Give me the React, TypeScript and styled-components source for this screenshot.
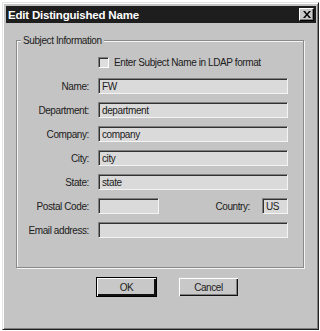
import React, { useState } from "react";
import styled, { createGlobalStyle } from "styled-components";

const GlobalStyle = createGlobalStyle`
  html, body {
    margin: 0;
    padding: 0;
    background: #ffffff;
  }
  body {
    font-family: "Liberation Sans", Arial, sans-serif;
    font-size: 10px;
    letter-spacing: -0.4px;
    color: #000;
  }
`;

const fields = [
  { label: "Name:", value: "FW" },
  { label: "Department:", value: "department" },
  { label: "Company:", value: "company" },
  { label: "City:", value: "city" },
  { label: "State:", value: "state" },
];

export default function App() {
  const [ldap, setLdap] = useState(false);

  return (
    <>
      <GlobalStyle />
      <Page>
        <Window>
          <TitleBar>
            <Title>Edit Distinguished Name</Title>
            <CloseButton aria-label="Close">
              <svg width="8" height="7" viewBox="0 0 8 7">
                <path d="M0 0h2l2 2.5L6 0h2L5 3.5 8 7H6L4 4.5 2 7H0l3-3.5z" fill="#000" />
              </svg>
            </CloseButton>
          </TitleBar>

          <Body>
            <GroupBox>
              <Legend>Subject Information</Legend>
              <Form>
                <CheckRow onClick={() => setLdap(!ldap)}>
                  <CheckBox>{ldap ? "✓" : ""}</CheckBox>
                  <span>Enter Subject Name in LDAP format</span>
                </CheckRow>

                {fields.map((f) => (
                  <React.Fragment key={f.label}>
                    <Label>{f.label}</Label>
                    <TextBox>{f.value}</TextBox>
                  </React.Fragment>
                ))}

                <Label>Postal Code:</Label>
                <SplitRow>
                  <TextBox $width={61} />
                  <CountryGroup>
                    <span>Country:</span>
                    <TextBox $width={26}>US</TextBox>
                  </CountryGroup>
                </SplitRow>

                <Label>Email address:</Label>
                <TextBox />
              </Form>
            </GroupBox>

            <ButtonRow>
              <Button $default>OK</Button>
              <Button>Cancel</Button>
            </ButtonRow>
          </Body>
        </Window>
      </Page>
    </>
  );
}

const Page = styled.div`
  padding: 2px 1px 0 2px;
`;

const Window = styled.div`
  width: 317px;
  height: 328px;
  box-sizing: border-box;
  background: #c4c4c4;
  border-top: 1px solid #e4e4e4;
  border-left: 1px solid #e4e4e4;
  border-right: 1px solid #202020;
  border-bottom: 1px solid #202020;
  box-shadow: inset 1px 1px 0 #ffffff, inset -1px -1px 0 #808080;
  padding: 3px 2px 2px 3px;
  display: flex;
  flex-direction: column;
`;

const TitleBar = styled.div`
  height: 17px;
  background: #1e1e1e;
  display: flex;
  align-items: center;
  justify-content: space-between;
  padding: 0 2px 0 2px;
`;

const Title = styled.div`
  color: #ffffff;
  font-weight: bold;
  font-size: 11.5px;
  letter-spacing: -0.2px;
`;

const CloseButton = styled.div`
  width: 15px;
  height: 13px;
  box-sizing: border-box;
  background: #c8c8c8;
  border-top: 1px solid #ffffff;
  border-left: 1px solid #ffffff;
  border-right: 1px solid #000;
  border-bottom: 1px solid #000;
  box-shadow: inset -1px -1px 0 #808080;
  display: flex;
  align-items: center;
  justify-content: center;
`;

const Body = styled.div`
  padding: 12px 12px 0 10px;
  display: flex;
  flex-direction: column;
`;

const GroupBox = styled.fieldset`
  margin: 0;
  padding: 10px 0 29px 0;
  border: 1px solid #8a8a8a;
  box-shadow: inset 1px 1px 0 #f4f4f4, 1px 1px 0 #f4f4f4;
  min-width: 0;
`;

const Legend = styled.legend`
  margin-left: 4px;
  padding: 0 2px;
  background: #c4c4c4;
  font-size: 10px;
  color: #202020;
`;

const Form = styled.div`
  display: grid;
  grid-template-columns: 72px 190px;
  column-gap: 9px;
  row-gap: 8px;
  align-items: center;
`;

const CheckRow = styled.label`
  grid-column: 2;
  display: flex;
  align-items: center;
  gap: 5px;
  height: 12px;
  margin-bottom: 2px;
  white-space: nowrap;
  cursor: default;
  color: #202020;
`;

const CheckBox = styled.span`
  width: 11px;
  height: 11px;
  box-sizing: border-box;
  background: #dedede;
  border-top: 1px solid #808080;
  border-left: 1px solid #808080;
  border-right: 1px solid #ffffff;
  border-bottom: 1px solid #ffffff;
  box-shadow: inset 1px 1px 0 #303030;
  font-size: 9px;
  line-height: 9px;
  text-align: center;
`;

const Label = styled.div`
  text-align: right;
  color: #202020;
  white-space: nowrap;
`;

const TextBox = styled.div<{ $width?: number }>`
  width: ${(p) => (p.$width ? `${p.$width}px` : "100%")};
  height: 16px;
  box-sizing: border-box;
  background: #dadada;
  border-top: 1px solid #808080;
  border-left: 1px solid #808080;
  border-right: 1px solid #f4f4f4;
  border-bottom: 1px solid #f4f4f4;
  box-shadow: inset 1px 1px 0 #303030;
  padding: 1px 0 0 3px;
  line-height: 13px;
  color: #202020;
  white-space: nowrap;
  overflow: hidden;
`;

const SplitRow = styled.div`
  display: flex;
  align-items: center;
  justify-content: space-between;
`;

const CountryGroup = styled.div`
  display: flex;
  align-items: center;
  gap: 12px;
  color: #202020;
`;

const ButtonRow = styled.div`
  display: flex;
  gap: 21px;
  padding: 9px 0 0 80px;
`;

const Button = styled.div<{ $default?: boolean }>`
  width: 61px;
  height: 20px;
  box-sizing: border-box;
  display: flex;
  align-items: center;
  justify-content: center;
  background: #c8c8c8;
  color: #202020;
  border: 1px solid ${(p) => (p.$default ? "#000" : "transparent")};
  box-shadow: ${(p) =>
    p.$default
      ? "inset 1px 1px 0 #ffffff, inset -2px -2px 0 #101010"
      : "inset 1px 1px 0 #ffffff, inset -1px -1px 0 #101010, inset -2px -2px 0 #808080"};
`;
